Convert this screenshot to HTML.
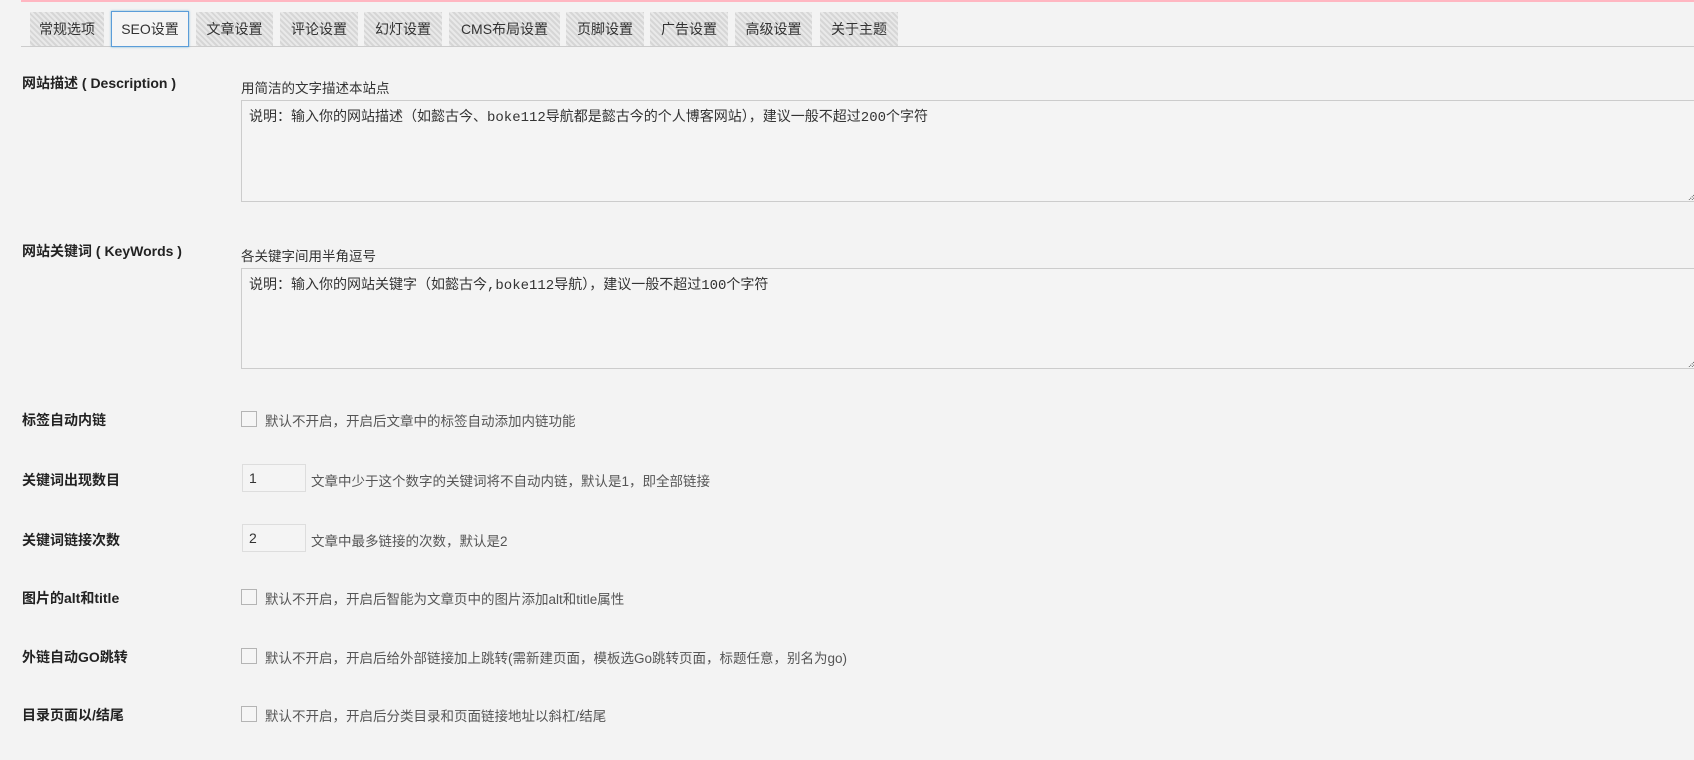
<!DOCTYPE html>
<html><head><meta charset="utf-8"><style>
html,body{margin:0;padding:0}
body{width:1694px;height:760px;background:#f3f3f3;position:relative;overflow:hidden;font-family:"Liberation Sans","Noto Sans CJK SC",sans-serif;font-size:14px;color:#444}
.a{position:absolute;white-space:nowrap}
.pink{left:21px;top:0;width:1673px;height:2px;background:#ffb6c1}
.line{left:21px;top:46px;width:1673px;height:1px;background:#ccc}
.tab{position:absolute;top:12px;height:34px;line-height:34px;text-align:center;font-size:14px;color:#333;background:#e0e0e0;background-image:repeating-linear-gradient(45deg,#e9e9e9 0 2px,#d6d6d6 2px 4px)}
.tab.on{background:#f5f5f5;border:1px solid #5b9dd9;box-sizing:border-box;height:36px;top:11px;line-height:34px;box-shadow:0 0 2px rgba(30,140,190,.6)}
.lbl{font-weight:bold;color:#222;font-size:14px;left:22px}
.hint{left:241px;color:#333;font-size:13.5px}
.ta{position:absolute;left:241px;width:1460px;border:1px solid #ccc;box-sizing:border-box;background:#f4f4f4}
.ta span{position:absolute;left:7px;top:5px;font-size:14px;color:#333;font-family:"Liberation Mono","Noto Sans CJK SC",monospace}
.ta svg{position:absolute;left:1446px;bottom:1px}
.cb{position:absolute;left:241px;width:14px;height:14px;border:1px solid #b4b4b4;background:#f5f5f5}
.in{position:absolute;left:242px;width:64px;height:28px;border:1px solid #ddd;background:#f4f4f4;box-sizing:border-box;padding-left:6px;line-height:26px;color:#333}
.d{color:#555;font-size:13.5px}
</style></head><body>
<div class="a pink"></div>
<div class="a line"></div>
<div class="tab" style="left:30px;width:74px">常规选项</div>
<div class="tab on" style="left:111px;width:78px">SEO设置</div>
<div class="tab" style="left:196px;width:77px">文章设置</div>
<div class="tab" style="left:280px;width:78px">评论设置</div>
<div class="tab" style="left:364px;width:78px">幻灯设置</div>
<div class="tab" style="left:449px;width:111px">CMS布局设置</div>
<div class="tab" style="left:566px;width:78px">页脚设置</div>
<div class="tab" style="left:650px;width:78px">广告设置</div>
<div class="tab" style="left:735px;width:77px">高级设置</div>
<div class="tab" style="left:820px;width:78px">关于主题</div>

<div class="a lbl" style="top:73px">网站描述 ( Description )</div>
<div class="a hint" style="top:77px">用简洁的文字描述本站点</div>
<div class="ta" style="top:100px;height:102px"><span>说明：输入你的网站描述（如懿古今、boke112导航都是懿古今的个人博客网站），建议一般不超过200个字符</span><svg width="8" height="8"><path d="M1 8L8 1M4 8L8 4" stroke="#555" stroke-width="1" stroke-dasharray="1 1"/></svg></div>

<div class="a lbl" style="top:241px">网站关键词 ( KeyWords )</div>
<div class="a hint" style="top:245px">各关键字间用半角逗号</div>
<div class="ta" style="top:268px;height:101px"><span>说明：输入你的网站关键字（如懿古今,boke112导航），建议一般不超过100个字符</span><svg width="8" height="8"><path d="M1 8L8 1M4 8L8 4" stroke="#555" stroke-width="1" stroke-dasharray="1 1"/></svg></div>

<div class="a lbl" style="top:410px">标签自动内链</div>
<div class="cb" style="top:411px"></div>
<div class="a d" style="left:265px;top:410px">默认不开启，开启后文章中的标签自动添加内链功能</div>

<div class="a lbl" style="top:470px">关键词出现数目</div>
<div class="in" style="top:464px">1</div>
<div class="a d" style="left:311px;top:470px">文章中少于这个数字的关键词将不自动内链，默认是1，即全部链接</div>

<div class="a lbl" style="top:530px">关键词链接次数</div>
<div class="in" style="top:524px">2</div>
<div class="a d" style="left:311px;top:530px">文章中最多链接的次数，默认是2</div>

<div class="a lbl" style="top:588px">图片的alt和title</div>
<div class="cb" style="top:589px"></div>
<div class="a d" style="left:265px;top:588px">默认不开启，开启后智能为文章页中的图片添加alt和title属性</div>

<div class="a lbl" style="top:647px">外链自动GO跳转</div>
<div class="cb" style="top:648px"></div>
<div class="a d" style="left:265px;top:647px">默认不开启，开启后给外部链接加上跳转(需新建页面，模板选Go跳转页面，标题任意，别名为go)</div>

<div class="a lbl" style="top:705px">目录页面以/结尾</div>
<div class="cb" style="top:706px"></div>
<div class="a d" style="left:265px;top:705px">默认不开启，开启后分类目录和页面链接地址以斜杠/结尾</div>
</body></html>
